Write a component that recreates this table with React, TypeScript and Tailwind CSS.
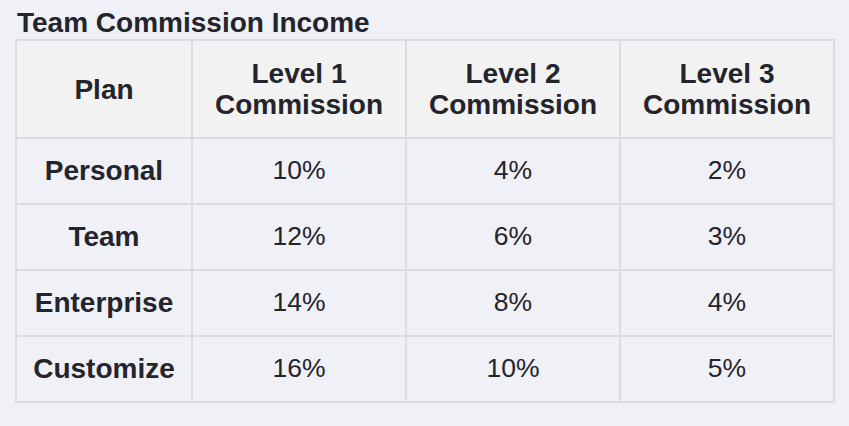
import React from "react";

const rows = [
  ["Personal", "10%", "4%", "2%"],
  ["Team", "12%", "6%", "3%"],
  ["Enterprise", "14%", "8%", "4%"],
  ["Customize", "16%", "10%", "5%"],
];

export default function App() {
  return (
    <div
      className="w-[849px] h-[426px] bg-[#f0f1f6] pl-[15px] pt-[7px] text-[#24242c]"
      style={{ fontFamily: '"Liberation Sans", Arial, sans-serif' }}
    >
      <h2 className="pl-[2px] text-[28px] leading-[31px] font-bold mb-[1px]">
        Team Commission Income
      </h2>
      <table className="w-[820px] border-collapse table-fixed">
        <colgroup>
          <col className="w-[176px]" />
          <col className="w-[214px]" />
          <col className="w-[214px]" />
          <col className="w-[214px]" />
        </colgroup>
        <thead>
          <tr className="h-[98px] bg-[#f2f2f2]">
            <th className="border-2 border-[#dcdcdf] text-[28px] leading-[31px] font-bold text-center">
              Plan
            </th>
            {[1, 2, 3].map((n) => (
              <th
                key={n}
                className="border-2 border-[#dcdcdf] text-[28px] leading-[31px] font-bold text-center"
              >
                Level {n}
                <br />
                Commission
              </th>
            ))}
          </tr>
        </thead>
        <tbody>
          {rows.map((r) => (
            <tr key={r[0]} className="h-[66px]">
              <td className="border-2 border-[#dcdcdf] text-[28px] font-bold text-center">
                {r[0]}
              </td>
              {r.slice(1).map((v, i) => (
                <td
                  key={i}
                  className="border-2 border-[#dcdcdf] text-[26.5px] text-center"
                >
                  {v}
                </td>
              ))}
            </tr>
          ))}
        </tbody>
      </table>
    </div>
  );
}
